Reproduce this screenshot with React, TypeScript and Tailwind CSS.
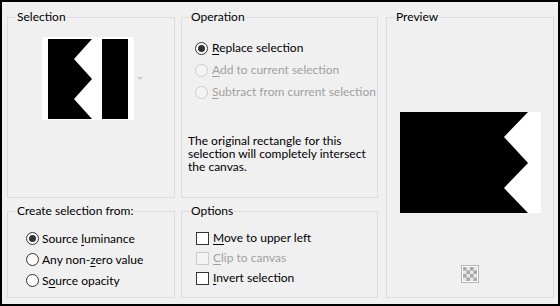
import type { ReactNode } from 'react';

const font = { fontFamily: 'Lato, "Open Sans", sans-serif' };

function Group({ title, className, children }: { title: string; className: string; children?: ReactNode }) {
  return (
    <div className={`relative border border-[#dcdcdc] ${className}`}>
      <span className="absolute -top-[9px] left-[8px] bg-[#f0f0f0] px-[1px] text-[12px] leading-[16px] text-black">
        {title}
      </span>
      {children}
    </div>
  );
}

function Radio({ checked, disabled }: { checked?: boolean; disabled?: boolean }) {
  return (
    <span
      className={`flex h-[13px] w-[13px] shrink-0 items-center justify-center rounded-full border ${
        disabled ? 'border-[#cccccc] bg-[#f4f4f4]' : 'border-[#333333] bg-white'
      }`}
    >
      {checked && <span className="h-[7px] w-[7px] rounded-full bg-[#333333]" />}
    </span>
  );
}

function Check({ disabled }: { disabled?: boolean }) {
  return (
    <span
      className={`block h-[13px] w-[13px] shrink-0 border ${
        disabled ? 'border-[#cccccc] bg-[#f4f4f4]' : 'border-[#333333] bg-white'
      }`}
    />
  );
}

function Label({ pre, key_, post, disabled }: { pre?: string; key_: string; post: string; disabled?: boolean }) {
  return (
    <span className={`whitespace-nowrap text-[12px] leading-[16px] ${disabled ? 'text-[#a0a0a0]' : 'text-black'}`}>
      {pre}
      <span className="underline underline-offset-[2px]">{key_}</span>
      {post}
    </span>
  );
}

export default function App() {
  return (
    <div className="h-[306px] w-[560px] border-2 border-black bg-[#f0f0f0] pl-[5px] pt-[15px]" style={font}>
      <div className="flex">
        <div className="flex w-[168px] flex-col">
          <Group title="Selection" className="h-[181px] w-[168px]">
            <div className="flex items-start pl-[34px] pt-[19px]">
              <div className="h-[83px] w-[92px] bg-white pl-[6px] pt-[2px]">
                <svg width="80" height="80" viewBox="0 0 80 80">
                  <rect x="0" y="0" width="80" height="80" fill="#000" />
                  <polygon points="44,0 54,0 54,80 44,80 26,60 44,40 26,20" fill="#fff" />
                </svg>
              </div>
              <svg width="6" height="4" viewBox="0 0 6 4" className="ml-[3px] mt-[40px]">
                <polygon points="0,0 6,0 3,3" fill="#c8c8c8" />
              </svg>
            </div>
          </Group>
          <Group title="Create selection from:" className="mt-[13px] h-[87px] w-[168px]">
            <div className="flex flex-col pl-[18px] pt-[16px]">
              <div className="flex h-[21px] items-center gap-[3px]">
                <Radio checked />
                <Label pre="Source " key_="l" post="uminance" />
              </div>
              <div className="flex h-[21px] items-center gap-[3px]">
                <Radio />
                <Label pre="Any non-" key_="z" post="ero value" />
              </div>
              <div className="flex h-[21px] items-center gap-[3px]">
                <Radio />
                <Label pre="S" key_="o" post="urce opacity" />
              </div>
            </div>
          </Group>
        </div>

        <div className="ml-[6px] flex w-[197px] flex-col">
          <Group title="Operation" className="h-[181px] w-[197px]">
            <div className="flex flex-col pl-[13px] pt-[19px]">
              <div className="flex h-[22px] items-center gap-[4px]">
                <Radio checked />
                <Label key_="R" post="eplace selection" />
              </div>
              <div className="flex h-[22px] items-center gap-[4px]">
                <Radio disabled />
                <Label key_="A" post="dd to current selection" disabled />
              </div>
              <div className="flex h-[22px] items-center gap-[4px]">
                <Radio disabled />
                <Label key_="S" post="ubtract from current selection" disabled />
              </div>
            </div>
            <p className="mt-[31px] whitespace-nowrap pl-[6px] text-[12px] leading-[13px] text-black">
              The original rectangle for this
              <br />
              selection will completely intersect
              <br />
              the canvas.
            </p>
          </Group>
          <Group title="Options" className="mt-[13px] h-[87px] w-[197px]">
            <div className="flex flex-col pl-[14px] pt-[16px]">
              <div className="flex h-[20px] items-center gap-[4px]">
                <Check />
                <Label key_="M" post="ove to upper left" />
              </div>
              <div className="flex h-[20px] items-center gap-[4px]">
                <Check disabled />
                <Label key_="C" post="lip to canvas" disabled />
              </div>
              <div className="flex h-[20px] items-center gap-[4px]">
                <Check />
                <Label key_="I" post="nvert selection" />
              </div>
            </div>
          </Group>
        </div>

        <Group title="Preview" className="ml-[8px] flex h-[281px] w-[168px] flex-col items-start">
          <div className="pl-[13px] pt-[94px]">
            <svg width="141" height="101" viewBox="0 0 141 101" className="block">
              <rect x="0" y="0" width="141" height="101" fill="#fff" />
              <polygon points="0,0 128,0 104,25 128,51 104,76 128,101 0,101" fill="#000" />
            </svg>
          </div>
          <div className="flex w-full justify-center pt-[52px]">
            <svg width="18" height="18" viewBox="0 0 18 18" className="block">
              <rect x="0.5" y="0.5" width="17" height="17" fill="#fff" stroke="#b4b4b4" />
              <rect x="2" y="2" width="14" height="14" fill="#e6e6e6" />
              <rect x="2" y="2" width="3.5" height="3.5" fill="#a8a8a8" />
              <rect x="9" y="2" width="3.5" height="3.5" fill="#a8a8a8" />
              <rect x="5.5" y="5.5" width="3.5" height="3.5" fill="#a8a8a8" />
              <rect x="12.5" y="5.5" width="3.5" height="3.5" fill="#a8a8a8" />
              <rect x="2" y="9" width="3.5" height="3.5" fill="#a8a8a8" />
              <rect x="9" y="9" width="3.5" height="3.5" fill="#a8a8a8" />
              <rect x="5.5" y="12.5" width="3.5" height="3.5" fill="#a8a8a8" />
              <rect x="12.5" y="12.5" width="3.5" height="3.5" fill="#a8a8a8" />
            </svg>
          </div>
        </Group>
      </div>
    </div>
  );
}
